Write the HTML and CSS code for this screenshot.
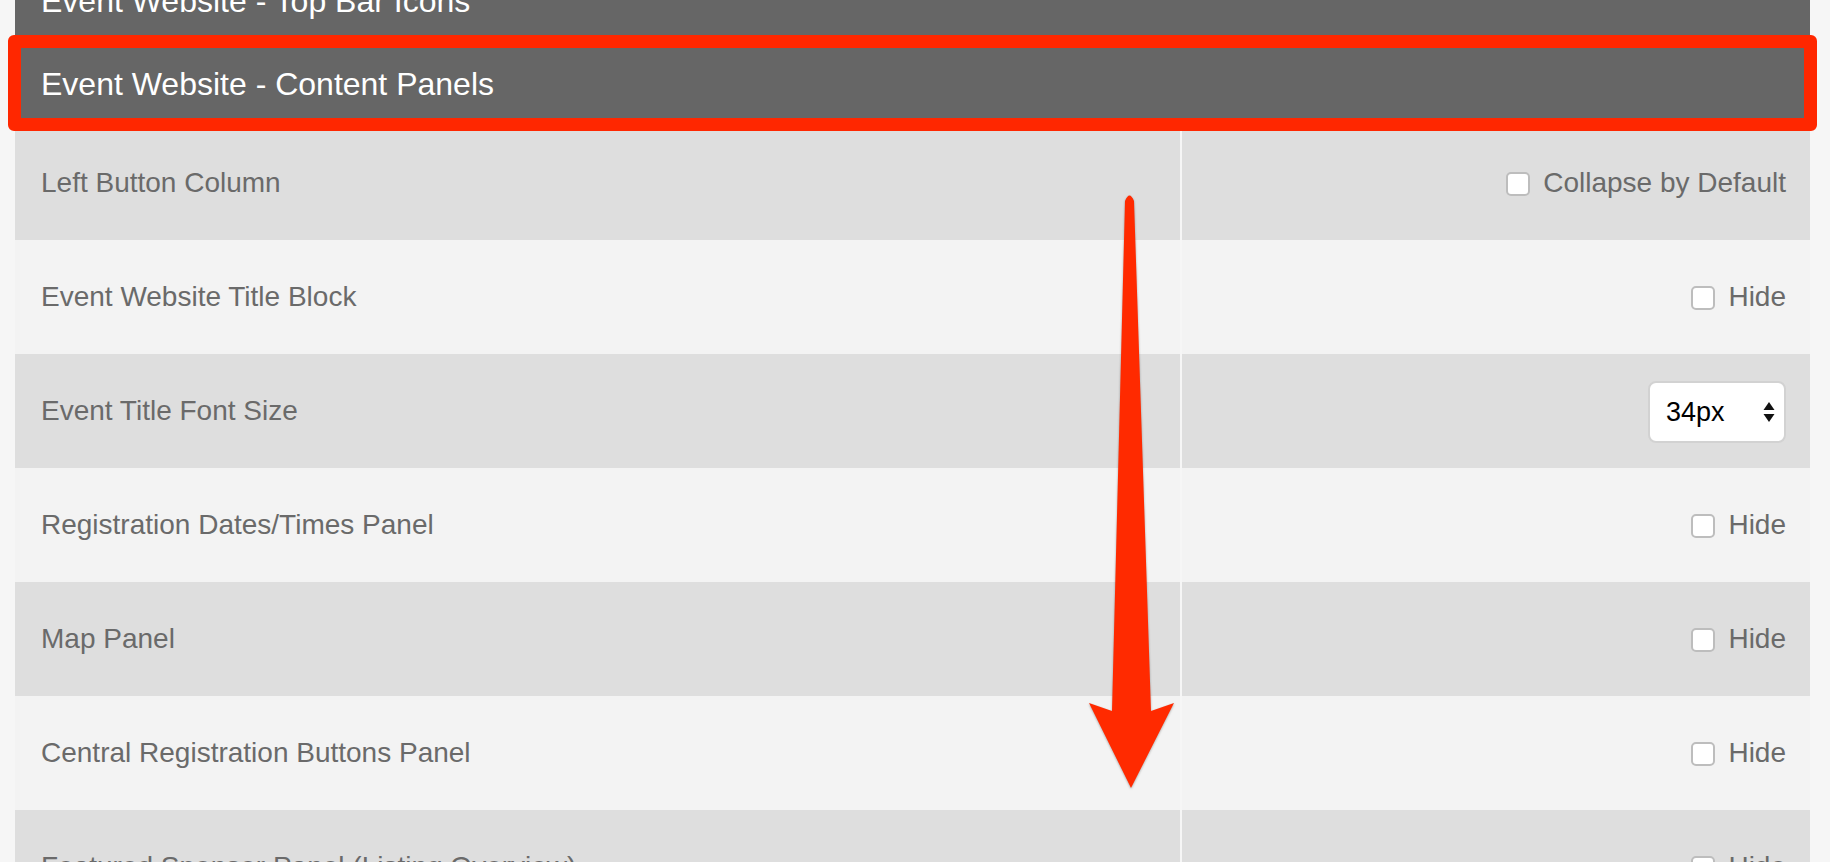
FILE: index.html
```html
<!DOCTYPE html>
<html>
<head>
	<title>Event Website Settings</title>
	<link rel="stylesheet" href="styles.css">
</head>
<body>
	<div class="page">
		<div class="section-head">Event Website - Top Bar Icons</div>
		<div class="section-head">Event Website - Content Panels</div>

		<div class="settings">
			<div class="row dark">
				<div class="cell label">Left Button Column</div>
				<div class="cell option">
					<label class="check"><input type="checkbox"> Collapse by Default</label>
				</div>
			</div>
			<div class="row light">
				<div class="cell label">Event Website Title Block</div>
				<div class="cell option">
					<label class="check"><input type="checkbox"> Hide</label>
				</div>
			</div>
			<div class="row dark">
				<div class="cell label">Event Title Font Size</div>
				<div class="cell option">
					<div class="select-box">
						<select>
							<option>34px</option>
						</select>
						<svg class="select-arrows" width="12" height="22" viewBox="0 0 12 22">
							<polygon points="6,1 11.5,9 0.5,9" fill="#111"/>
							<polygon points="0.5,13 11.5,13 6,21" fill="#111"/>
						</svg>
					</div>
				</div>
			</div>
			<div class="row light">
				<div class="cell label">Registration Dates/Times Panel</div>
				<div class="cell option">
					<label class="check"><input type="checkbox"> Hide</label>
				</div>
			</div>
			<div class="row dark">
				<div class="cell label">Map Panel</div>
				<div class="cell option">
					<label class="check"><input type="checkbox"> Hide</label>
				</div>
			</div>
			<div class="row light">
				<div class="cell label">Central Registration Buttons Panel</div>
				<div class="cell option">
					<label class="check"><input type="checkbox"> Hide</label>
				</div>
			</div>
			<div class="row dark">
				<div class="cell label">Featured Sponsor Panel (Listing Overview)</div>
				<div class="cell option">
					<label class="check"><input type="checkbox"> Hide</label>
				</div>
			</div>
		</div>
	</div>

	<!-- annotation overlays -->
	<div class="highlight-box"></div>
	<svg class="annot-arrow" width="1830" height="862" viewBox="0 0 1830 862">
		<path d="M1125,201 Q1129.5,190 1134,201 L1151,711 L1174,703 L1131,788 L1089,703 L1112,711 Z" fill="#ff2a00"/>
	</svg>
</body>
</html>
```

FILE: styles.css
```css
html, body {
	margin: 0;
	height: 100%;
	overflow: hidden;
}

body {
	font-family: "Liberation Sans", Arial, sans-serif;
	background-color: #f6f6f6;
}

.page {
	margin: -40px 20px 0 15px;
}

.section-head {
	height: 83px;
	display: flex;
	align-items: center;
	padding-left: 26px;
	background-color: #666666;
	color: #ffffff;
	font-size: 32px;
}

.settings {
	display: flex;
	flex-direction: column;
}

.row {
	display: grid;
	grid-template-columns: 1165px 1fr;
	column-gap: 2px;
	height: 114px;
}

.row.dark .cell {
	background-color: #dedede;
}

.row.light .cell {
	background-color: #f3f3f3;
}

.cell {
	display: flex;
	align-items: center;
	color: #6a6a6a;
	font-size: 28px;
}

.cell.label {
	padding-left: 26px;
}

.cell.option {
	justify-content: flex-end;
	padding-right: 24px;
}

.check {
	display: flex;
	align-items: center;
	gap: 13px;
}

.check input {
	appearance: none;
	-webkit-appearance: none;
	margin: 2px 0 0;
	width: 24px;
	height: 24px;
	background-color: #ffffff;
	border: 2px solid #bdbdbd;
	border-radius: 5px;
	box-sizing: border-box;
}

.select-box {
	position: relative;
	width: 138px;
	height: 62px;
	margin-top: 2px;
}

.select-box select {
	appearance: none;
	-webkit-appearance: none;
	width: 100%;
	height: 100%;
	padding: 0 0 0 16px;
	border: 2px solid #d2d2d2;
	border-radius: 8px;
	background-color: #ffffff;
	font-family: "Liberation Sans", Arial, sans-serif;
	font-size: 27px;
	color: #000000;
	box-sizing: border-box;
}

.select-arrows {
	position: absolute;
	right: 11px;
	top: 20px;
	pointer-events: none;
}

.highlight-box {
	position: absolute;
	left: 8px;
	top: 35px;
	width: 1809px;
	height: 96px;
	border: 13px solid #ff2700;
	border-radius: 6px;
	box-sizing: border-box;
}

.annot-arrow {
	position: absolute;
	left: 0;
	top: 0;
	filter: drop-shadow(0 1px 1px rgba(0, 0, 0, 0.3));
}
```
